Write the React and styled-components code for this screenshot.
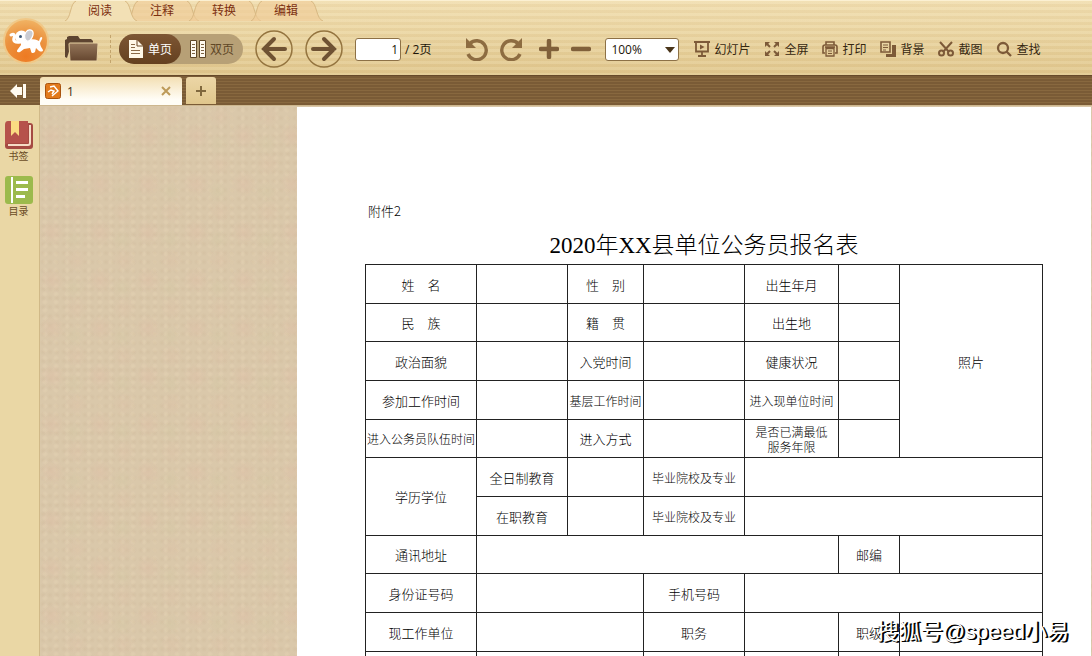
import React from 'react';
import styled, { createGlobalStyle } from 'styled-components';

const GlobalStyle = createGlobalStyle`
  * {
    box-sizing: border-box;
  }
  body {
    margin: 0;
    font-family: "Open Sans", "Noto Sans CJK SC", sans-serif;
    font-size: 12px;
    color: #3b2a14;
  }
  button, input, select {
    font: inherit;
    color: inherit;
    padding: 0;
    margin: 0;
    border: 0;
    background: none;
  }
  svg {
    display: block;
    flex: none;
  }
`;

const App = styled.div`
  display: flex;
  flex-direction: column;
  height: 100vh;
  overflow: hidden;
`;

const Header = styled.header`
  display: flex;
  height: 75px;
  border-top: 1px solid #fbf0d2;
  background:
    repeating-linear-gradient(rgba(255, 246, 214, 0.14) 0 3px, rgba(196, 160, 96, 0.07) 3px 6px),
    linear-gradient(#f0ddb0, #ead5a3 40%, #dfc58c);
`;

const Logo = styled.button`
  width: 46px;
  height: 46px;
  margin: 17px 16px 0 3px;
`;

const HeaderMain = styled.div`
  flex: 1;
  min-width: 0;
`;

const Menu = styled.nav`
  display: flex;
  height: 20px;
  padding-left: 4px;
`;

const MenuTab = styled.button`
  position: relative;
  width: 62px;
  line-height: 20px;
  color: #7c2f10;
  z-index: ${props => (props.$active ? 1 : 0)};
  span {
    position: relative;
  }
`;

const TabShape = styled.svg`
  position: absolute;
  top: 0;
  left: -4px;
`;

const Toolbar = styled.div`
  display: flex;
  align-items: center;
  height: 54px;
  padding-top: 2px;
`;

const IconButton = styled.button`
  margin-right: ${props => props.$gap || 12}px;
`;

const Divider = styled.div`
  height: 28px;
  margin-right: 8px;
  border-left: 1px dashed #c3a46c;
`;

const PageMode = styled.div`
  display: flex;
  width: 124px;
  height: 30px;
  margin-right: 12px;
  border-radius: 15px;
  background: #b7a076;
`;

const ModeButton = styled.button`
  display: flex;
  align-items: center;
  justify-content: center;
  gap: 4px;
  width: 62px;
  border-radius: 15px;
  color: ${props => (props.$active ? '#fff' : '#5f4726')};
  background: ${props => (props.$active ? 'linear-gradient(#7d5634, #64401f)' : 'none')};
`;

const PageField = styled.label`
  display: flex;
  align-items: center;
  gap: 4px;
  margin-right: 34px;
  color: #1d1509;
  white-space: nowrap;
`;

const PageInput = styled.input`
  width: 46px;
  height: 23px;
  padding-right: 2px;
  border: 1px solid #8d7146;
  border-radius: 3px;
  background: #fff;
  text-align: right;
`;

const ZoomField = styled.div`
  position: relative;
  margin: 0 15px 0 2px;
  svg {
    position: absolute;
    top: 9px;
    right: 4px;
    pointer-events: none;
  }
`;

const ZoomSelect = styled.select`
  appearance: none;
  width: 74px;
  height: 23px;
  padding-left: 5px;
  border: 1px solid #8d7146;
  border-radius: 3px;
  background: #fff;
  color: #1d1509;
`;

const Tools = styled.div`
  display: flex;
  gap: 14px;
`;

const ToolButton = styled.button`
  display: flex;
  align-items: center;
  gap: 4px;
  white-space: nowrap;
  color: #35270f;
`;

const TabBar = styled.div`
  display: flex;
  align-items: flex-end;
  height: 30px;
  border-top: 1px solid #66492a;
  background: repeating-linear-gradient(#7a5b36 0 2px, #88683f 2px 3px);
`;

const Collapse = styled.button`
  display: flex;
  align-items: center;
  width: 40px;
  height: 29px;
  padding-left: 10px;
`;

const FileTab = styled.div`
  display: flex;
  align-items: center;
  width: 142px;
  height: 28px;
  padding: 0 11px 0 5px;
  border-radius: 3px 3px 0 0;
  background: linear-gradient(#f3dfb3, #fffdf6 80%);
`;

const FileName = styled.span`
  flex: 1;
  padding-left: 6px;
`;

const NewTab = styled.button`
  display: flex;
  align-items: center;
  justify-content: center;
  width: 30px;
  height: 27px;
  margin: 0 0 1px 4px;
  border-radius: 3px 3px 0 0;
  background: linear-gradient(#ecd6a6, #e0c68c);
`;

const Body = styled.div`
  display: flex;
  flex: 1;
  min-height: 0;
`;

const Sidebar = styled.aside`
  display: flex;
  flex-direction: column;
  gap: 13px;
  width: 40px;
  padding: 16px 2px 0 0;
  border-right: 1px solid #d0b988;
  background: #ead7a5;
`;

const SideButton = styled.button`
  display: flex;
  flex-direction: column;
  align-items: center;
  font-size: 10px;
  line-height: 14px;
  color: #6b4d26;
`;

const Viewer = styled.main`
  flex: 1;
  min-width: 0;
  padding: 1px 1px 0 257px;
  border-top: 1px solid #cdb78f;
  overflow: hidden;
  background-color: #dac8aa;
  background-image:
    radial-gradient(circle at 12px 30px, rgba(222, 190, 166, 0.45), transparent 13px),
    radial-gradient(circle at 36px 10px, rgba(222, 192, 166, 0.35), transparent 12px),
    radial-gradient(circle at 34px 38px, rgba(212, 200, 164, 0.45), transparent 11px),
    radial-gradient(circle at 3px 3px, rgba(170, 140, 100, 0.08) 1px, transparent 3px),
    radial-gradient(circle at 5px 4px, rgba(245, 225, 195, 0.2) 1px, transparent 3px);
  background-size: 48px 48px, 48px 48px, 48px 48px, 7px 9px, 11px 8px;
`;

const Paper = styled.article`
  height: 1123px;
  padding: 94px 48px 0 68px;
  background: #fff;
  color: #000;
  font-family: "Noto Sans CJK SC", sans-serif;
  font-weight: 300;
`;

const Attachment = styled.p`
  margin: 0;
  padding-left: 3px;
  font-size: 13px;
  line-height: 20px;
`;

const Title = styled.h1`
  margin: 5px 0 1px;
  font-size: 23px;
  font-weight: 300;
  line-height: 34px;
  text-align: center;
`;

const Latin = styled.span`
  font-family: "Liberation Serif", serif;
  font-weight: 400;
`;

const Form = styled.table`
  width: 100%;
  table-layout: fixed;
  border-collapse: collapse;
`;

const Row = styled.tr`
  height: 39px;
  &:nth-child(3n + 2) {
    height: 38px;
  }
`;

const Cell = styled.td`
  padding: 0;
  border: 1px solid #222;
  font-size: ${props => (props.$small ? 12 : 13)}px;
  font-weight: 300;
  line-height: 15px;
  text-align: center;
  white-space: pre;
`;

const Watermark = styled.div`
  position: absolute;
  right: 23px;
  bottom: 8px;
  color: #fff;
  font-family: "Liberation Sans", "Noto Sans CJK SC", sans-serif;
  font-size: 22px;
  line-height: 32px;
  text-shadow: 1px 1px 0 #000, 2px 1px 0 #000;
`;

const menu = ['阅读', '注释', '转换', '编辑'];

const columns = [111, 91, 76, 101, 94, 61, 143];

// a string is a label, '' an empty field, an object adds spans or small type
const small = (text, rest) => ({ text, small: true, ...rest });
const empty = span => ({ text: '', span });

const rows = [
  ['姓\u3000名', '', '性\u3000别', '', '出生年月', '', { text: '照片', rowSpan: 5 }],
  ['民\u3000族', '', '籍\u3000贯', '', '出生地', ''],
  ['政治面貌', '', '入党时间', '', '健康状况', ''],
  ['参加工作时间', '', small('基层工作时间'), '', small('进入现单位时间'), ''],
  [small('进入公务员队伍时间'), '', '进入方式', '', small('是否已满最低\n服务年限'), ''],
  [{ text: '学历学位', rowSpan: 2 }, '全日制教育', '', small('毕业院校及专业'), empty(3)],
  ['在职教育', '', small('毕业院校及专业'), empty(3)],
  ['通讯地址', empty(4), '邮编', ''],
  ['身份证号码', empty(2), '手机号码', empty(3)],
  ['现工作单位', empty(2), '职务', '', '职级', ''],
  ['', empty(2), '', '', '', '']
];

const ElephantLogo = () => (
  <svg width="46" height="46" viewBox="0 0 46 46">
    <defs>
      <radialGradient id="logo" cx="50%" cy="85%" r="85%">
        <stop offset="0" stopColor="#ee7a22" />
        <stop offset="0.6" stopColor="#eb923f" />
        <stop offset="1" stopColor="#f1b566" />
      </radialGradient>
    </defs>
    <circle cx="23" cy="23" r="22" fill="url(#logo)" stroke="#f0c887" strokeWidth="2" />
    <path d="M8 17c3-2 4 0 3 3s1 5 6 4" fill="none" stroke="#fff" strokeWidth="3" strokeLinecap="round" />
    <circle cx="18.500" cy="19" r="6.500" fill="#fff" />
    <path
      d="M18 23c5-3 15-2 18 0l1-3c1-2 3-1 2 1l-2 4c0 3 2 5 3 7 0 2-3 2-5 0l-2-2-1 4c-2 2-4 1-4-1l-1-3-6 1-4 3c-3 1-4-1-2-3l3-4z"
      fill="#fff"
    />
    <path d="M23 14c3-4 8-2 7 3-1 4-4 7-6 6-3-1-3-6-1-9z" fill="#c9cbd2" stroke="#fff" strokeWidth="1.200" />
    <circle cx="17.500" cy="18.500" r="1.500" fill="#3c5877" />
  </svg>
);

const FolderIcon = () => (
  <svg width="34" height="28" viewBox="0 0 34 28">
    <defs>
      <linearGradient id="folder" x2="0" y2="1">
        <stop offset="0" stopColor="#94765a" />
        <stop offset="1" stopColor="#65462f" />
      </linearGradient>
    </defs>
    <path d="M0 22V5l2-1V2l2-1h9l2 3h11l2 2v4H6L2 23z" fill="#5d4430" />
    <path d="M5 8h27q1 0 1 1l-1 17H5L4 9q0-1 1-1z" fill="url(#folder)" stroke="#e9d3a3" />
  </svg>
);

const SinglePageIcon = () => (
  <svg width="16" height="18" viewBox="0 0 16 18">
    <path d="M1 0h8l6 6v12H1z" fill="#fff8e8" />
    <path d="M9 0v6h6" fill="none" stroke="#6b4726" />
    <path d="M3 4.500h4M3 7.500h4M3 10.500h9M3 13.500h9" stroke="#8a6a48" />
  </svg>
);

const DoublePageIcon = () => (
  <svg width="16" height="18" viewBox="0 0 16 18">
    <path d="M.5.500h6v17h-6zM9.500.500h6v17h-6z" fill="#fffaf0" stroke="#5f4726" />
    <path d="M2 4.500h3M2 7.500h3M2 10.500h3M2 13.500h3M11 4.500h3M11 7.500h3M11 10.500h3M11 13.500h3" stroke="#7c6444" />
  </svg>
);

const ArrowIcon = ({ flip }) => (
  <svg width="38" height="38" viewBox="0 0 38 38">
    <g transform={flip ? 'translate(38 0) scale(-1 1)' : undefined}>
      <circle cx="19" cy="19" r="18" fill="none" stroke="#94743f" strokeWidth="1.500" />
      <path d="M30 19H9M19 9L9 19l10 10" fill="none" stroke="#6f5233" strokeWidth="4" strokeLinecap="round" strokeLinejoin="miter" />
    </g>
  </svg>
);

const RotateIcon = ({ flip }) => (
  <svg width="24" height="24" viewBox="0 0 24 24">
    <g transform={flip ? 'translate(24 0) scale(-1 1)' : undefined}>
      <path d="M5 6.500A9.500 9.500 0 1 1 3 17" fill="none" stroke="#8d6c41" strokeWidth="3.400" />
      <path d="M1 1v10h10z" fill="#8d6c41" />
    </g>
  </svg>
);

const ZoomIcon = ({ plus }) => (
  <svg width="20" height="20" viewBox="0 0 20 20">
    <path d={plus ? 'M2 10h16M10 2v16' : 'M2 10h16'} stroke="#80603a" strokeWidth="4.500" strokeLinecap="round" />
  </svg>
);

const tools = [
  {
    label: '幻灯片',
    icon: (
      <>
        <path d="M0 1h16M2 1v9.500h12V1M8 11v4M4 15h8" fill="none" stroke="#7d5a38" strokeWidth="1.800" />
        <path d="M6 3.500v5l4.500-2.500z" fill="#7d5a38" />
      </>
    )
  },
  {
    label: '全屏',
    icon: (
      <>
        <path d="M1 1h5L1 6zM15 1v5l-5-5zM1 15v-5l5 5zM15 15h-5l5-5z" fill="#7d5a38" />
        <path d="M3 3l3 3M13 3l-3 3M3 13l3-3M13 13l-3-3" stroke="#7d5a38" strokeWidth="2" />
      </>
    )
  },
  {
    label: '打印',
    icon: (
      <>
        <path d="M4 4V1h8v3M3 12H1V6q0-2 2-2h10q2 0 2 2v6h-2" fill="none" stroke="#7d5a38" strokeWidth="1.600" />
        <path d="M4 7.500h8V15H4zM3 6h10" fill="none" stroke="#7d5a38" strokeWidth="1.300" />
        <path d="M6 10h4M6 12.500h4" stroke="#7d5a38" />
      </>
    )
  },
  {
    label: '背景',
    icon: (
      <>
        <path d="M1 1h9v10H1z" fill="none" stroke="#7d5a38" strokeWidth="1.600" />
        <path d="M3 4h5M3 6.500h5M3 9h3" stroke="#7d5a38" />
        <path d="M12 4h4v12H6v-3h6z" fill="#7d5a38" />
      </>
    )
  },
  {
    label: '截图',
    icon: (
      <g fill="none" stroke="#7d5a38" strokeWidth="2">
        <path d="M2 1l9 10M14 1L5 11" />
        <circle cx="3.500" cy="12" r="2.500" />
        <circle cx="12.500" cy="12" r="2.500" />
      </g>
    )
  },
  {
    label: '查找',
    icon: (
      <g fill="none" stroke="#7d5a38" strokeWidth="2.300">
        <circle cx="7" cy="7" r="5" />
        <path d="M10.500 10.500L15 15" />
      </g>
    )
  }
];

const FoxitIcon = () => (
  <svg width="16" height="16" viewBox="0 0 16 16">
    <rect x="0.500" y="0.500" width="15" height="15" rx="2" fill="#e27a1c" stroke="#a8530f" />
    <path d="M5 4l4-1 4 5-6 5M3 9l3-2 3 1-2 3" fill="none" stroke="#fff" strokeWidth="1.400" />
  </svg>
);

const BookmarkIcon = () => (
  <svg width="28" height="28" viewBox="0 0 28 28">
    <path d="M5 2h20q3 0 3 3v20q0 3-3 3H3q-3 0-3-3V4z" fill="#a54a42" />
    <path d="M3 24h20q2 0 2-2V4" fill="none" stroke="#f6dcc6" strokeWidth="2" />
    <path d="M3 0h20v22H3q-1 0-3 2V4q0-4 3-4z" fill="#b6524b" />
    <path d="M6 0h8v15l-4-4-4 4z" fill="#fbdc82" />
  </svg>
);

const OutlineIcon = () => (
  <svg width="28" height="28" viewBox="0 0 28 28">
    <rect width="28" height="28" rx="3" fill="#9cba4c" />
    <path d="M7 1v26" stroke="#fff" strokeWidth="2" />
    <path d="M11 6.500h12M11 13.500h12M11 20.500h9" stroke="#fff" strokeWidth="3" />
  </svg>
);

const FormCell = ({ cell }) => {
  const { text, span, rowSpan, small: isSmall } = typeof cell === 'string' ? { text: cell } : cell;
  return (
    <Cell as={text ? 'th' : 'td'} colSpan={span} rowSpan={rowSpan} $small={isSmall}>
      {text}
    </Cell>
  );
};

const ReaderApp = () => (
  <App>
    <GlobalStyle />
    <Header>
      <Logo aria-label="菜单">
        <ElephantLogo />
      </Logo>
      <HeaderMain>
        <Menu>
          {menu.map((label, i) => (
            <MenuTab key={label} $active={i === 0}>
              <TabShape width="72" height="20" viewBox="0 0 72 20">
                <path d="M0 20C6 18 5 2 11 0H60C66 2 65 18 72 20z" fill={i === 0 ? '#f2e0b5' : '#f0cb97'} fillOpacity={i === 0 ? 1 : 0.6} />
                <path d="M0 20C6 18 5 2 11 0M60 0C66 2 65 18 72 20" fill="none" stroke="#d8b882" />
              </TabShape>
              <span>{label}</span>
            </MenuTab>
          ))}
        </Menu>
        <Toolbar>
          <IconButton $gap={11} aria-label="打开">
            <FolderIcon />
          </IconButton>
          <Divider />
          <PageMode>
            <ModeButton $active>
              <SinglePageIcon />
              单页
            </ModeButton>
            <ModeButton>
              <DoublePageIcon />
              双页
            </ModeButton>
          </PageMode>
          <IconButton aria-label="上一页">
            <ArrowIcon />
          </IconButton>
          <IconButton aria-label="下一页">
            <ArrowIcon flip />
          </IconButton>
          <PageField>
            <PageInput defaultValue="1" />/ 2页
          </PageField>
          <IconButton $gap={10} aria-label="向左旋转">
            <RotateIcon />
          </IconButton>
          <IconButton $gap={16} aria-label="向右旋转">
            <RotateIcon flip />
          </IconButton>
          <IconButton aria-label="放大">
            <ZoomIcon plus />
          </IconButton>
          <IconButton aria-label="缩小">
            <ZoomIcon />
          </IconButton>
          <ZoomField>
            <ZoomSelect aria-label="缩放" defaultValue="100%">
              <option>100%</option>
            </ZoomSelect>
            <svg width="10" height="6" viewBox="0 0 10 6">
              <path d="M0 0h10L5 6z" fill="#4a351a" />
            </svg>
          </ZoomField>
          <Tools>
            {tools.map(tool => (
              <ToolButton key={tool.label}>
                <svg width="16" height="16" viewBox="0 0 16 16">
                  {tool.icon}
                </svg>
                {tool.label}
              </ToolButton>
            ))}
          </Tools>
        </Toolbar>
      </HeaderMain>
    </Header>
    <TabBar>
      <Collapse aria-label="收起">
        <svg width="17" height="14" viewBox="0 0 17 14">
          <path d="M0 7l7-7v3h5v8H7v3zM13 0h3v14h-3z" fill="#fffaf0" />
        </svg>
      </Collapse>
      <FileTab>
        <FoxitIcon />
        <FileName>1</FileName>
        <button aria-label="关闭">
          <svg width="10" height="10" viewBox="0 0 10 10">
            <path d="M1 1l8 8M9 1L1 9" stroke="#bd9a58" strokeWidth="2" />
          </svg>
        </button>
      </FileTab>
      <NewTab aria-label="新标签">
        <svg width="10" height="10" viewBox="0 0 10 10">
          <path d="M0 5h10M5 0v10" stroke="#80683e" strokeWidth="2" />
        </svg>
      </NewTab>
    </TabBar>
    <Body>
      <Sidebar>
        <SideButton>
          <BookmarkIcon />
          书签
        </SideButton>
        <SideButton>
          <OutlineIcon />
          目录
        </SideButton>
      </Sidebar>
      <Viewer>
        <Paper>
          <Attachment>附件2</Attachment>
          <Title>
            <Latin>2020</Latin>年<Latin>XX</Latin>县单位公务员报名表
          </Title>
          <Form>
            <colgroup>
              {columns.map((width, i) => (
                <col key={i} width={width} />
              ))}
            </colgroup>
            <tbody>
              {rows.map((row, i) => (
                <Row key={i}>
                  {row.map((cell, j) => (
                    <FormCell key={j} cell={cell} />
                  ))}
                </Row>
              ))}
            </tbody>
          </Form>
        </Paper>
      </Viewer>
    </Body>
    <Watermark>搜狐号@speed小易</Watermark>
  </App>
);

export default ReaderApp;
